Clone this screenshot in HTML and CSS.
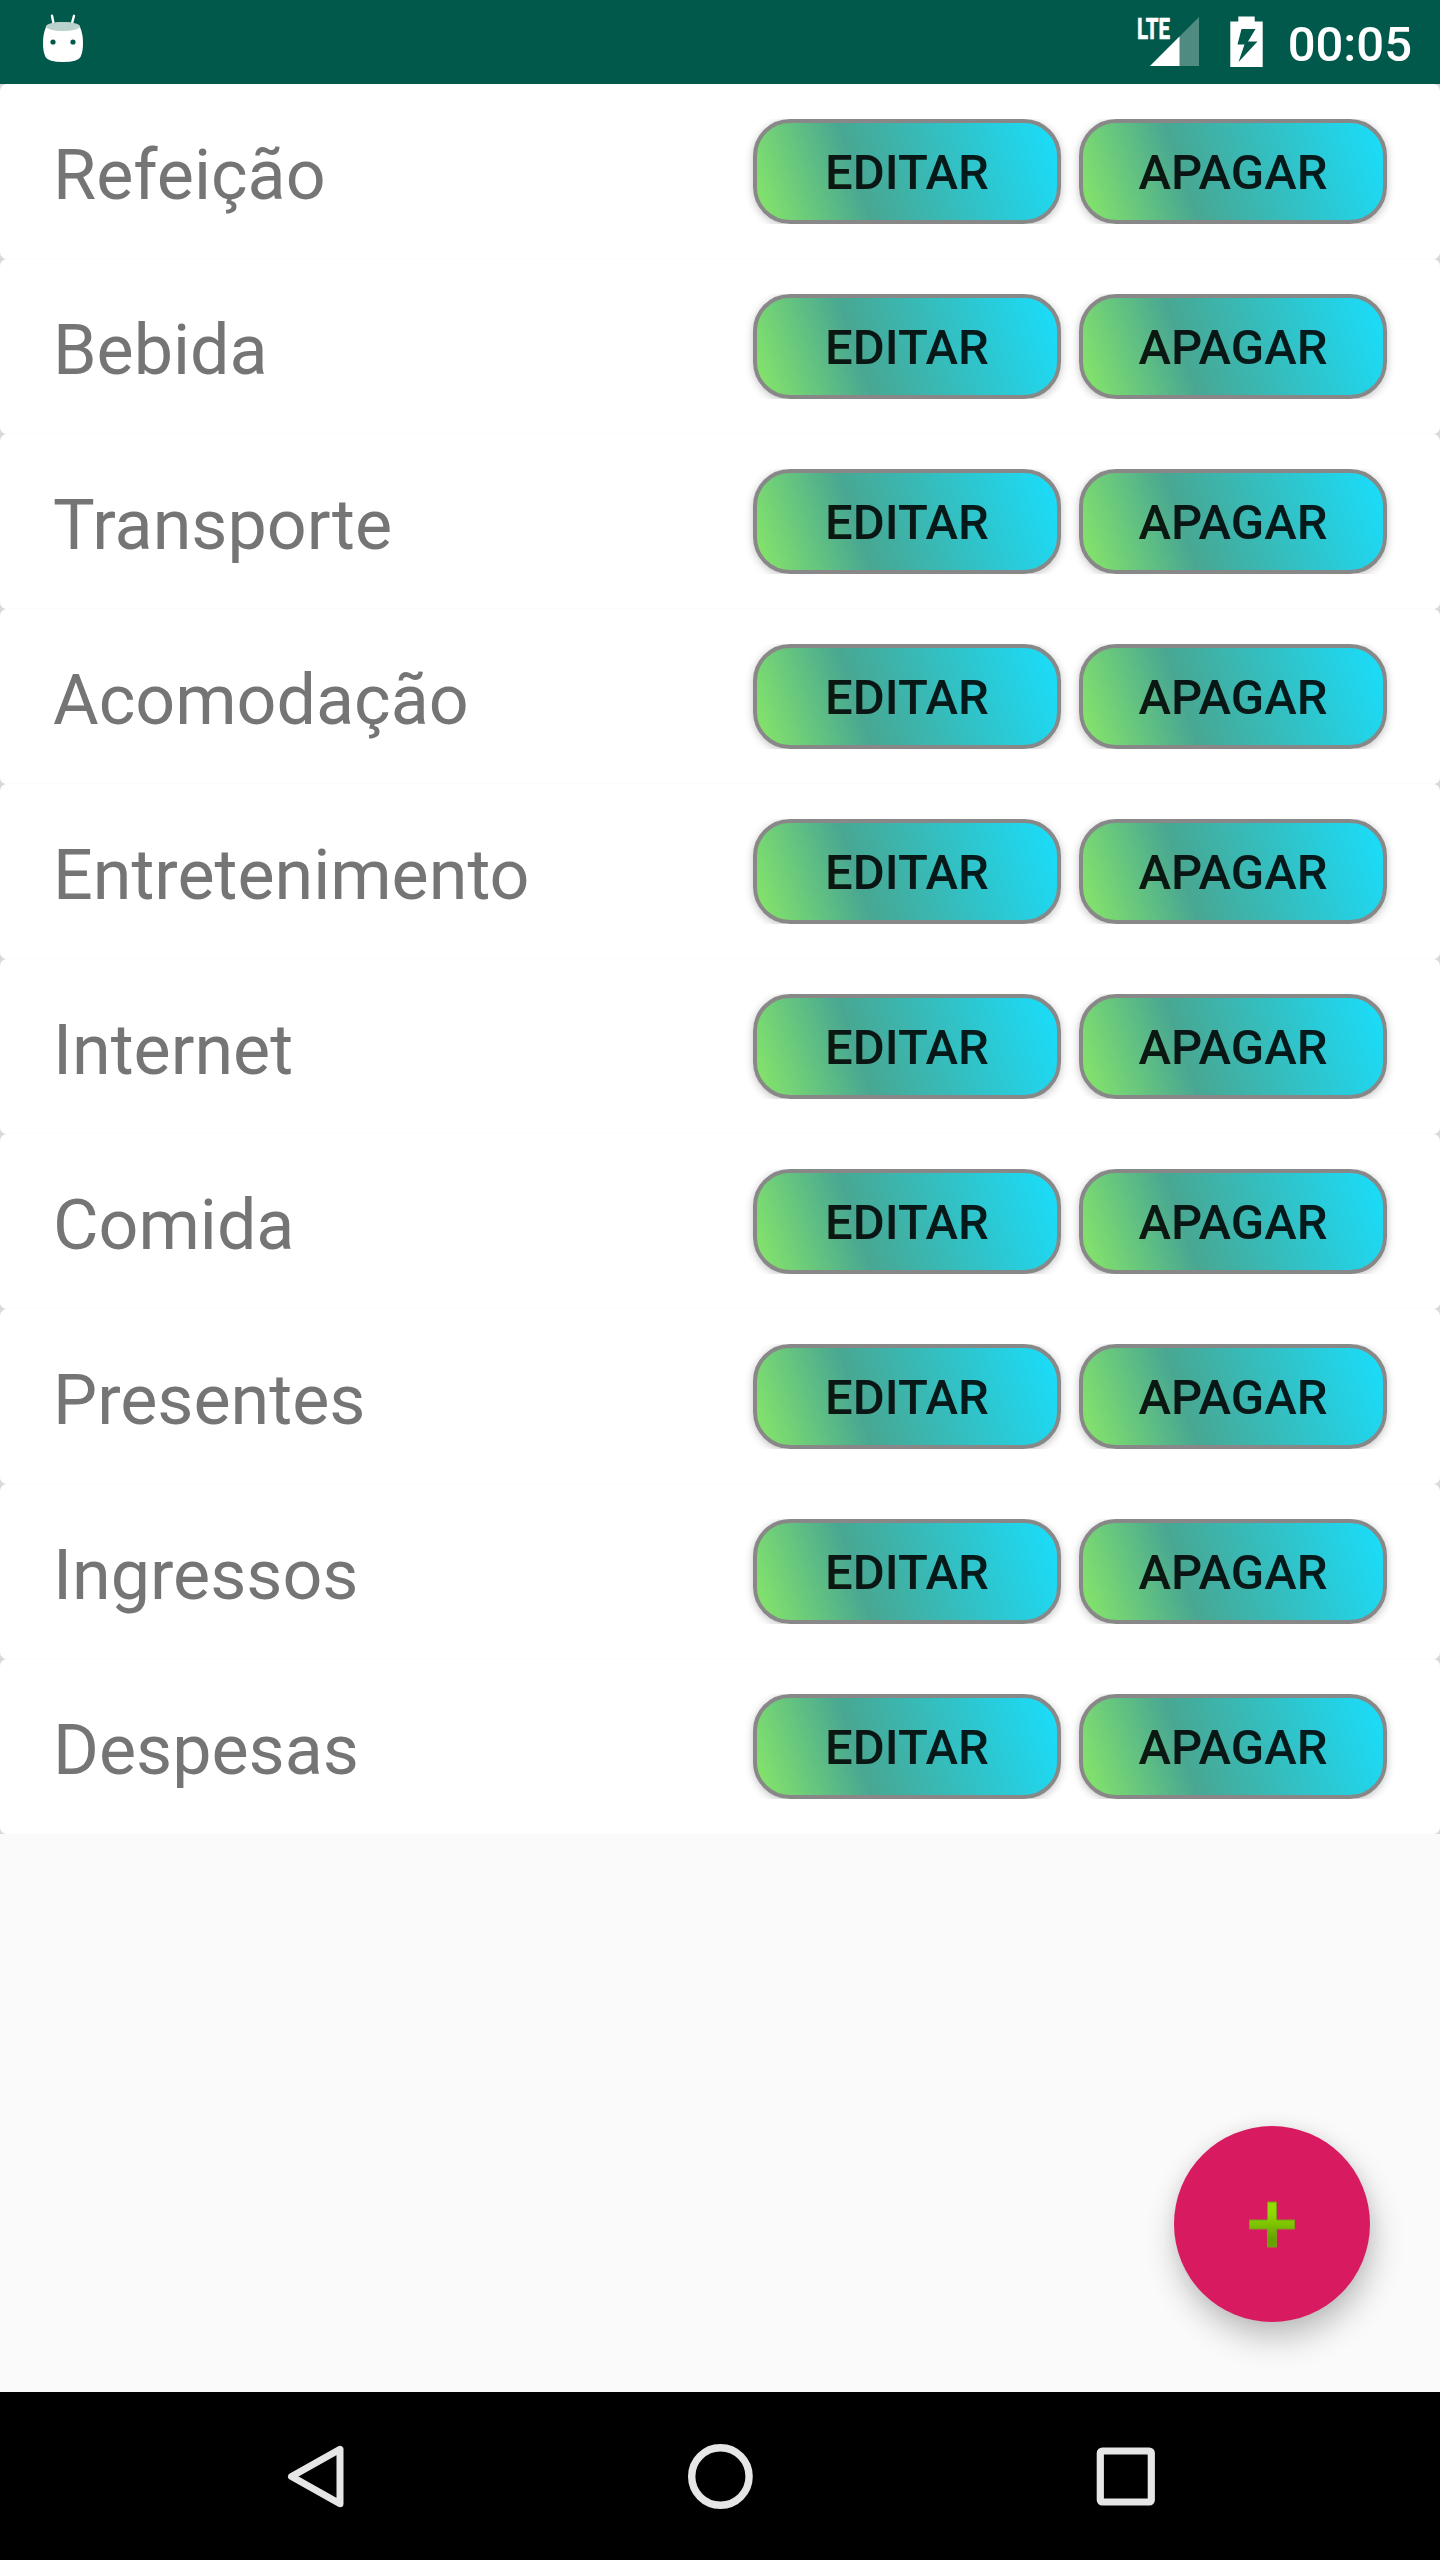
FILE: index.html
```html
<!DOCTYPE html>
<html lang="pt-BR">
<head>
<meta charset="utf-8">
<title>Categorias</title>
<link rel="stylesheet" href="styles.css">
</head>
<body>
<div class="screen">
  <header class="status-bar">
    <svg class="app-icon" width="42" height="50" viewBox="0 0 42 50">
      <path d="M10 1.800l1.800 9M32 1.800l-2.400 9" stroke="#fff" stroke-width="2.400" stroke-linecap="round" fill="none"/>
      <path d="M4 13C9 6.500 33 6.500 38 13Q41 20 41 29Q41 38 38.500 43Q36 48 21 48Q6 48 3.500 43Q1 38 1 29Q1 20 4 13Z" fill="#fff"/>
      <ellipse cx="21" cy="12.500" rx="17" ry="4.600" fill="#b9d2cd"/>
      <circle cx="11" cy="28" r="2.600" fill="#00594b"/>
      <circle cx="31" cy="28" r="2.600" fill="#00594b"/>
    </svg>
    <div class="status-right">
      <svg class="signal" width="65" height="52" viewBox="0 0 65 52">
        <path d="M63 1V50H14Z" fill="#4f8b81"/>
        <path d="M43.500 20.500V50H14Z" fill="#fff"/>
        <text class="lte" x="1" y="23" textLength="33" lengthAdjust="spacingAndGlyphs">LTE</text>
      </svg>
      <svg class="battery" width="33" height="52" viewBox="0 0 33 52">
        <path fill="#fff" fill-rule="evenodd" d="M8.300 0.500H24.700V5.500H32.700V51H0.300V5.500H8.300ZM11.500 13L7.500 28.500H14.500L8.500 46L27.500 25.500H18L25.500 13Z"/>
      </svg>
      <span class="clock">00:05</span>
    </div>
  </header>
  <main class="content">
    <ul class="list">
      <li class="row"><span class="name">Refeição</span><button class="btn">EDITAR</button><button class="btn">APAGAR</button></li>
      <li class="row"><span class="name">Bebida</span><button class="btn">EDITAR</button><button class="btn">APAGAR</button></li>
      <li class="row"><span class="name">Transporte</span><button class="btn">EDITAR</button><button class="btn">APAGAR</button></li>
      <li class="row"><span class="name">Acomodação</span><button class="btn">EDITAR</button><button class="btn">APAGAR</button></li>
      <li class="row"><span class="name">Entretenimento</span><button class="btn">EDITAR</button><button class="btn">APAGAR</button></li>
      <li class="row"><span class="name">Internet</span><button class="btn">EDITAR</button><button class="btn">APAGAR</button></li>
      <li class="row"><span class="name">Comida</span><button class="btn">EDITAR</button><button class="btn">APAGAR</button></li>
      <li class="row"><span class="name">Presentes</span><button class="btn">EDITAR</button><button class="btn">APAGAR</button></li>
      <li class="row"><span class="name">Ingressos</span><button class="btn">EDITAR</button><button class="btn">APAGAR</button></li>
      <li class="row"><span class="name">Despesas</span><button class="btn">EDITAR</button><button class="btn">APAGAR</button></li>
    </ul>
    <button class="fab" aria-label="Adicionar">
      <svg width="48" height="48" viewBox="0 0 48 48">
        <defs><linearGradient id="plus" x1="0" y1="0" x2="0" y2="1"><stop offset="0.200" stop-color="#90dc00"/><stop offset="0.500" stop-color="#7dc300"/><stop offset="0.800" stop-color="#66a300"/></linearGradient></defs>
        <path d="M19.500 2H28.500V20H46.500V29H28.500V47H19.500V29H1.500V20H19.500Z" fill="url(#plus)" stroke="#7f9b1c" stroke-width="1" stroke-linejoin="round"/>
      </svg>
    </button>
  </main>
  <nav class="nav-bar">
    <svg width="70" height="70" viewBox="0 0 70 70"><path d="M60 8.300V62.700L11.500 35.500Z" fill="none" stroke="#e6e6e6" stroke-width="7" stroke-linejoin="round"/></svg>
    <svg width="70" height="70" viewBox="0 0 70 70"><circle cx="35.400" cy="35.500" r="28.700" fill="none" stroke="#e6e6e6" stroke-width="7.400"/></svg>
    <svg width="70" height="70" viewBox="0 0 70 70"><rect x="10.300" y="10" width="51" height="51" rx="2" fill="none" stroke="#e6e6e6" stroke-width="7.200"/></svg>
  </nav>
</div>
</body>
</html>
```
FILE: styles.css
```css
* {
  box-sizing: border-box;
}

body {
  margin: 0;
  font-family: Roboto, sans-serif;
}

.screen {
  width: 1440px;
  height: 2560px;
  display: flex;
  flex-direction: column;
  background: #fafafa;
}

.status-bar {
  height: 84px;
  flex: none;
  display: flex;
  align-items: flex-start;
  justify-content: space-between;
  padding: 14px 28px 0 42px;
  background: #00594b;
}

.status-right {
  display: flex;
  align-items: flex-start;
}

.signal {
  margin: 2px 29px 0 0;
  overflow: visible;
}

.lte {
  font: 700 30px Roboto, sans-serif;
  fill: #fff;
  stroke: #fff;
  stroke-width: 0.7px;
}

.battery {
  margin: 2px 25px 0 0;
}

.clock {
  padding-top: 1px;
  font-size: 49px;
  font-weight: 500;
  line-height: 60px;
  color: #fff;
}

.content {
  flex: 1;
  position: relative;
}

.list {
  margin: 0;
  padding: 0;
  list-style: none;
  background: #d9d9d9;
}

.row {
  height: 175px;
  display: flex;
  align-items: flex-start;
  gap: 18px;
  padding: 35px 53px 0;
  border-radius: 7px;
  background: #fff;
  box-shadow: inset 0 -1px #fcfcfc;
}

.name {
  flex: 1;
  font-size: 70px;
  line-height: 112px;
  color: #757575;
}

.btn {
  width: 308px;
  height: 105px;
  padding: 2px 0 0;
  border: 4px solid #888;
  border-radius: 37px;
  background: linear-gradient(71.2deg, #8bea66 0%, #48a792 35%, #18dfff 100%) border-box;
  box-shadow: 0 2px 9px rgba(0, 0, 0, 0.24);
  clip-path: inset(0 -12px);
  font: 500 49px/95px Roboto, sans-serif;
  color: rgba(0, 0, 0, 0.87);
}

.fab {
  position: absolute;
  right: 70px;
  bottom: 70px;
  width: 196px;
  height: 196px;
  padding: 0;
  border: 0;
  border-radius: 50%;
  display: grid;
  place-items: center;
  background: #d81b60;
  box-shadow: 3px 16px 32px rgba(0, 0, 0, 0.24), 0 0 16px rgba(0, 0, 0, 0.06);
}

.nav-bar {
  height: 168px;
  flex: none;
  display: flex;
  align-items: center;
  justify-content: center;
  gap: 335px;
  background: #000;
}
```
